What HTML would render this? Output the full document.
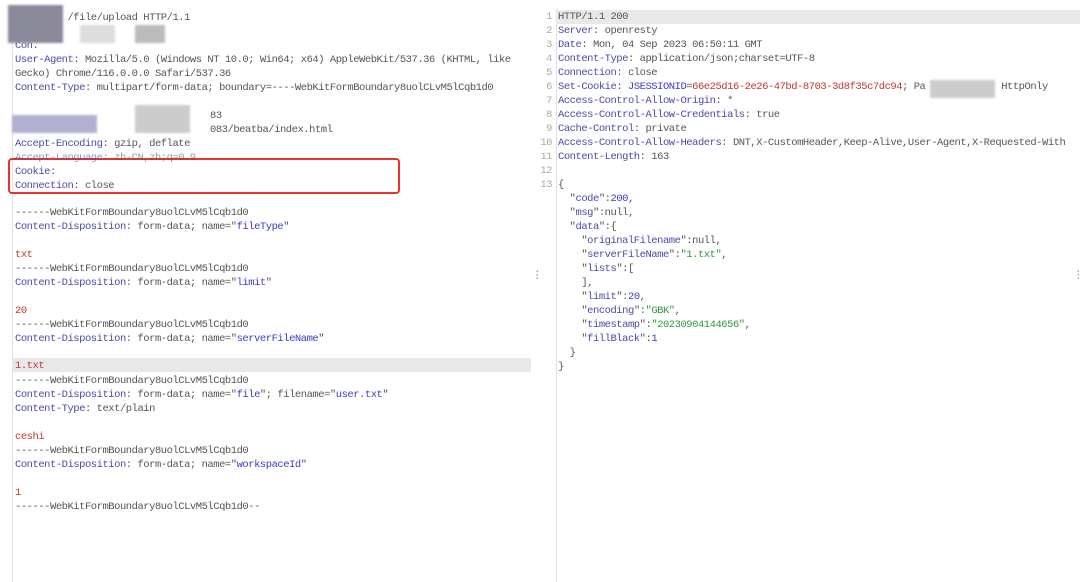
<!DOCTYPE html>
<html><head><meta charset="utf-8"><style>
body{margin:0;width:1080px;height:582px;background:#fff;overflow:hidden;position:relative;font-family:"Liberation Mono","DejaVu Sans Mono",monospace;font-size:10.5px;letter-spacing:-0.47px;color:#555}
.l{position:absolute;white-space:pre;height:14px;line-height:14px;font-family:"Liberation Mono","DejaVu Sans Mono",monospace}
.k{color:#4a4aa8}.r{color:#c0392b}.b{color:#3a3ad0}.g{color:#2e9a3a}.n{color:#aaa;text-align:right;width:12px}
.blur{position:absolute;background:#bbb;filter:blur(1px)}
</style></head><body>
<div style="position:absolute;left:12px;top:8px;width:1px;height:574px;background:#e2e2e2"></div>
<div style="position:absolute;left:556px;top:8px;width:1px;height:574px;background:#e2e2e2"></div>
<div style="position:absolute;left:12px;top:358px;width:519px;height:14px;background:#e8e8e8"></div>
<div style="position:absolute;left:556px;top:10px;width:524px;height:14px;background:#e8e8e8"></div>
<div style="position:absolute;left:8px;top:158px;width:388px;height:32px;border:2px solid #e8332a;border-radius:4px"></div>

<div class="l" style="left:15px;top:11px">         /file/upload HTTP/1.1</div>
<div class="l k" style="left:15px;top:39px">Con.</div>
<div class="l" style="left:15px;top:53px"><span class="k">User-Agent</span>: Mozilla/5.0 (Windows NT 10.0; Win64; x64) AppleWebKit/537.36 (KHTML, like</div>
<div class="l" style="left:15px;top:67px">Gecko) Chrome/116.0.0.0 Safari/537.36</div>
<div class="l" style="left:15px;top:81px"><span class="k">Content-Type</span>: multipart/form-data; boundary=----WebKitFormBoundary8uolCLvM5lCqb1d0</div>
<div class="l" style="left:210px;top:109px">83</div>
<div class="l" style="left:210px;top:123px">083/beatba/index.html</div>
<div class="l" style="left:15px;top:137px"><span class="k">Accept-Encoding</span>: gzip, deflate</div>
<div class="l" style="left:15px;top:151px;opacity:.6"><span class="k">Accept-Language</span>: zh-CN,zh;q=0.9</div>
<div class="l k" style="left:15px;top:165px">Cookie:</div>
<div class="l" style="left:15px;top:179px"><span class="k">Connection</span>: close</div>
<div class="blur" style="left:8px;top:5px;width:55px;height:38px;background:#8a8a9a"></div>
<div class="blur" style="left:80px;top:25px;width:35px;height:18px;background:#ddd"></div>
<div class="blur" style="left:135px;top:25px;width:30px;height:18px;background:#bbb"></div>
<div class="blur" style="left:12px;top:115px;width:85px;height:18px;background:#b0b0d0"></div>
<div class="blur" style="left:135px;top:105px;width:55px;height:28px;background:#ccc"></div>
<div class="blur" style="left:930px;top:80px;width:65px;height:18px;background:#ccc"></div>

<div class="l" style="left:15px;top:206px">------WebKitFormBoundary8uolCLvM5lCqb1d0</div>
<div class="l" style="left:15px;top:220px"><span class="k">Content-Disposition</span>: form-data; name="<span class="b">fileType</span>"</div>
<div class="l r" style="left:15px;top:248px">txt</div>
<div class="l" style="left:15px;top:262px">------WebKitFormBoundary8uolCLvM5lCqb1d0</div>
<div class="l" style="left:15px;top:276px"><span class="k">Content-Disposition</span>: form-data; name="<span class="b">limit</span>"</div>
<div class="l r" style="left:15px;top:304px">20</div>
<div class="l" style="left:15px;top:318px">------WebKitFormBoundary8uolCLvM5lCqb1d0</div>
<div class="l" style="left:15px;top:332px"><span class="k">Content-Disposition</span>: form-data; name="<span class="b">serverFileName</span>"</div>
<div class="l r" style="left:15px;top:359px">1.txt</div>
<div class="l" style="left:15px;top:374px">------WebKitFormBoundary8uolCLvM5lCqb1d0</div>
<div class="l" style="left:15px;top:388px"><span class="k">Content-Disposition</span>: form-data; name="<span class="b">file</span>"; filename="<span class="b">user.txt</span>"</div>
<div class="l" style="left:15px;top:402px"><span class="k">Content-Type</span>: text/plain</div>
<div class="l r" style="left:15px;top:430px">ceshi</div>
<div class="l" style="left:15px;top:444px">------WebKitFormBoundary8uolCLvM5lCqb1d0</div>
<div class="l" style="left:15px;top:458px"><span class="k">Content-Disposition</span>: form-data; name="<span class="b">workspaceId</span>"</div>
<div class="l r" style="left:15px;top:486px">1</div>
<div class="l" style="left:15px;top:500px">------WebKitFormBoundary8uolCLvM5lCqb1d0--</div>
<div class="l" style="left:532px;top:269px;color:#888">⋮</div>
<div class="l" style="left:1073px;top:269px;color:#888">⋮</div>

<div class="l n" style="left:540px;top:10px">1</div><div class="l" style="left:558px;top:10px">HTTP/1.1 200</div>
<div class="l n" style="left:540px;top:24px">2</div><div class="l" style="left:558px;top:24px"><span class="k">Server</span>: openresty</div>
<div class="l n" style="left:540px;top:38px">3</div><div class="l" style="left:558px;top:38px"><span class="k">Date</span>: Mon, 04 Sep 2023 06:50:11 GMT</div>
<div class="l n" style="left:540px;top:52px">4</div><div class="l" style="left:558px;top:52px"><span class="k">Content-Type</span>: application/json;charset=UTF-8</div>
<div class="l n" style="left:540px;top:66px">5</div><div class="l" style="left:558px;top:66px"><span class="k">Connection</span>: close</div>
<div class="l n" style="left:540px;top:80px">6</div><div class="l" style="left:558px;top:80px"><span class="k">Set-Cookie</span>: <span class="b">JSESSIONID</span>=<span class="r">66e25d16-2e26-47bd-8703-3d8f35c7dc94</span>; Pa             HttpOnly</div>
<div class="l n" style="left:540px;top:94px">7</div><div class="l" style="left:558px;top:94px"><span class="k">Access-Control-Allow-Origin</span>: *</div>
<div class="l n" style="left:540px;top:108px">8</div><div class="l" style="left:558px;top:108px"><span class="k">Access-Control-Allow-Credentials</span>: true</div>
<div class="l n" style="left:540px;top:122px">9</div><div class="l" style="left:558px;top:122px"><span class="k">Cache-Control</span>: private</div>
<div class="l n" style="left:540px;top:136px">10</div><div class="l" style="left:558px;top:136px"><span class="k">Access-Control-Allow-Headers</span>: DNT,X-CustomHeader,Keep-Alive,User-Agent,X-Requested-With</div>
<div class="l n" style="left:540px;top:150px">11</div><div class="l" style="left:558px;top:150px"><span class="k">Content-Length</span>: 163</div>
<div class="l n" style="left:540px;top:164px">12</div>
<div class="l n" style="left:540px;top:178px">13</div><div class="l" style="left:558px;top:178px">{</div>
<div class="l" style="left:558px;top:192px">  "<span class="k">code</span>":<span class="b">200</span>,</div>
<div class="l" style="left:558px;top:206px">  "<span class="k">msg</span>":null,</div>
<div class="l" style="left:558px;top:220px">  "<span class="k">data</span>":{</div>
<div class="l" style="left:558px;top:234px">    "<span class="k">originalFilename</span>":null,</div>
<div class="l" style="left:558px;top:248px">    "<span class="k">serverFileName</span>":<span class="g">"1.txt"</span>,</div>
<div class="l" style="left:558px;top:262px">    "<span class="k">lists</span>":[</div>
<div class="l" style="left:558px;top:276px">    ],</div>
<div class="l" style="left:558px;top:290px">    "<span class="k">limit</span>":<span class="b">20</span>,</div>
<div class="l" style="left:558px;top:304px">    "<span class="k">encoding</span>":<span class="g">"GBK"</span>,</div>
<div class="l" style="left:558px;top:318px">    "<span class="k">timestamp</span>":<span class="g">"20230904144656"</span>,</div>
<div class="l" style="left:558px;top:332px">    "<span class="k">fillBlack</span>":<span class="b">1</span></div>
<div class="l" style="left:558px;top:346px">  }</div>
<div class="l" style="left:558px;top:360px">}</div>
</body></html>
